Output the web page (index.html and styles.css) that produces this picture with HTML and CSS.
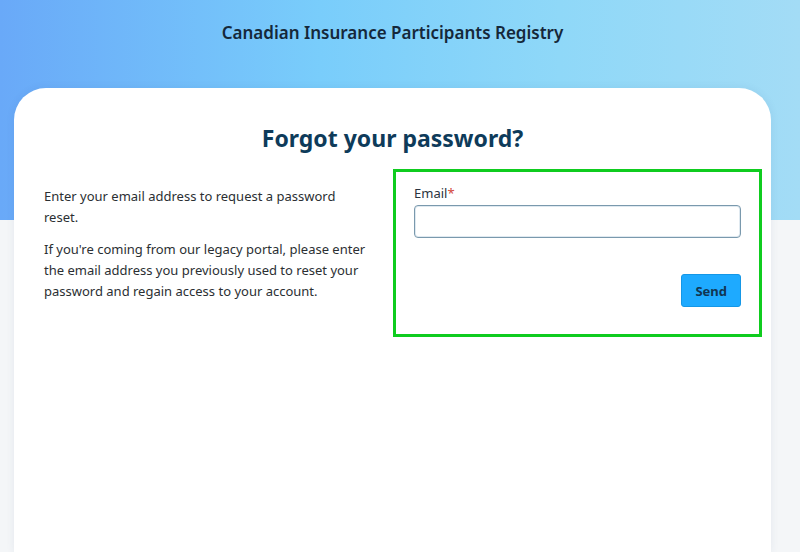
FILE: index.html
```html
<!DOCTYPE html>
<html>
<head>
    <meta charset="UTF-8">
    <title>Forgot your password? - Canadian Insurance Participants Registry</title>
    <link rel="stylesheet" href="styles.css">
</head>
<body>
    <header class="site-header">
        <div class="site-title">Canadian Insurance Participants Registry</div>
    </header>

    <main class="card">
        <h1>Forgot your password?</h1>
        <div class="columns">
            <div class="intro">
                <p>Enter your email address to request a password reset.</p>
                <p>If you're coming from our legacy portal, please enter the email address you previously used to reset your password and regain access to your account.</p>
            </div>

            <!-- Reset form -->
            <form class="reset-form" onsubmit="return false;">
                <label for="email">Email<span class="required">*</span></label>
                <input type="email" id="email" name="email" required autofocus>
                <div class="actions">
                    <button type="submit" class="btn-send">Send</button>
                </div>
            </form>
        </div>
    </main>
</body>
</html>
```

FILE: styles.css
```css
body {
    margin: 0;
    font-family: "Noto Sans", Arial, sans-serif;
    color: #2b2f33;
    background:
        linear-gradient(90deg, #69a9f8 0%, #79cdfb 40%, #8fd8f8 70%, #a3dcf6 100%) 0 0 / 100% 220px no-repeat,
        #f4f6f8;
    min-height: 552px;
}

.site-header {
    width: 757px;
    margin-left: 14px;
    height: 88px;
    text-align: center;
}

.site-title {
    padding-top: 21px;
    font-size: 17px;
    font-weight: 600;
    color: #15283a;
}

.card {
    width: 757px;
    margin-left: 14px;
    min-height: 464px;
    background-color: #fff;
    border-radius: 32px 32px 0 0;
    box-shadow: 0 0 8px rgba(40, 70, 110, 0.08);
    padding-top: 32px;
    box-sizing: border-box;
}

h1 {
    margin: 0;
    text-align: center;
    font-size: 23px;
    font-weight: 700;
    line-height: 36px;
    color: #0e3b5a;
}

.columns {
    display: grid;
    grid-template-columns: 322px 369px;
    column-gap: 27px;
    padding-left: 30px;
    margin-top: 13px;
}

.intro {
    padding-top: 17px;
    font-size: 13px;
    line-height: 21px;
}

.intro p {
    margin: 0 0 11px;
}

.reset-form {
    border: 3px solid #0fcc1f;
    padding: 11px 18px 27px;
}

.reset-form label {
    display: block;
    font-size: 13px;
    line-height: 20px;
    color: #2a3440;
}

.required {
    color: #d2453c;
}

.reset-form input {
    display: block;
    width: 100%;
    height: 33px;
    margin-top: 2px;
    box-sizing: border-box;
    border: 1px solid #7a99ad;
    border-radius: 4px;
    box-shadow: inset 0 0 0 1px #dfe9f0;
    padding: 0 7px;
    font-family: inherit;
    font-size: 13px;
    outline: none;
}

.actions {
    display: flex;
    justify-content: flex-end;
    margin-top: 36px;
}

.btn-send {
    height: 33px;
    padding: 0 13px;
    background-color: #1eaaff;
    color: #113552;
    border: 1px solid #1597e6;
    border-radius: 3px;
    font-family: inherit;
    font-size: 13px;
    font-weight: 700;
    cursor: pointer;
}
```
